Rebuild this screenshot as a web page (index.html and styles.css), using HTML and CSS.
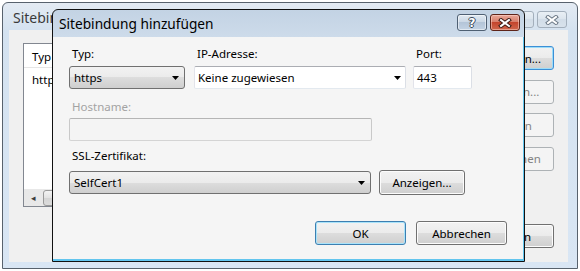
FILE: index.html
```html
<!DOCTYPE html>
<html lang="de">
<head>
    <meta charset="UTF-8">
    <title>Sitebindung hinzufügen</title>
    <link rel="stylesheet" href="styles.css">
</head>
<body>
    <!-- Hintergrundfenster: Sitebindungen -->
    <div class="bg-window">
        <div class="bg-titlebar">
            <span class="bg-title">Sitebindungen</span>
            <div class="caption bg-caption">
                <span class="cap-btn cap-inactive"><span class="qmark">?</span></span>
                <span class="cap-btn cap-inactive">
                    <svg width="14" height="10" viewBox="0 0 14 10"><path d="M3 2L11 8M11 2L3 8" stroke="#6b7886" stroke-width="4" stroke-linecap="square"/><path d="M3 2L11 8M11 2L3 8" stroke="#fff" stroke-width="2" stroke-linecap="square"/></svg>
                </span>
            </div>
        </div>
        <div class="bg-client">
            <div class="listview">
                <div class="lv-header">
                    <span class="lv-col">Typ</span>
                </div>
                <div class="lv-row">
                    <span class="lv-col">http</span>
                </div>
                <div class="hscroll">
                    <span class="scroll-arrow">◂</span>
                    <span class="scroll-thumb"></span>
                </div>
            </div>
            <div class="side-buttons">
                <button class="button button-focus">Hinzufügen...</button>
                <button class="button" disabled>Bearbeiten...</button>
                <button class="button" disabled>Entfernen</button>
                <button class="button" disabled>Durchsuchen</button>
                <button class="button button-close">Schließen</button>
            </div>
        </div>
    </div>

    <!-- Vordergrund: Sitebindung hinzufügen -->
    <div class="dialog">
        <div class="dlg-titlebar">
            <span class="dlg-title">Sitebindung hinzufügen</span>
            <div class="caption">
                <span class="cap-btn cap-help"><span class="qmark">?</span></span>
                <span class="cap-btn cap-close">
                    <svg width="14" height="10" viewBox="0 0 14 10"><path d="M3 2L11 8M11 2L3 8" stroke="#3b1a14" stroke-width="4" stroke-linecap="square"/><path d="M3 2L11 8M11 2L3 8" stroke="#fff" stroke-width="2" stroke-linecap="square"/></svg>
                </span>
            </div>
        </div>
        <div class="dlg-client">
            <div class="field-row">
                <div class="field field-typ">
                    <label class="label">Typ:</label>
                    <div class="combo">
                        <span>https</span>
                        <svg class="arrow" width="7" height="4" viewBox="0 0 7 4"><path d="M0 0H7L3.5 4Z"/></svg>
                    </div>
                </div>
                <div class="field field-ip">
                    <label class="label">IP-Adresse:</label>
                    <div class="textbox combo-edit">
                        <span>Keine zugewiesen</span>
                        <svg class="arrow" width="7" height="4" viewBox="0 0 7 4"><path d="M0 0H7L3.5 4Z"/></svg>
                    </div>
                </div>
                <div class="field field-port">
                    <label class="label">Port:</label>
                    <div class="textbox">443</div>
                </div>
            </div>

            <div class="field field-host">
                <label class="label label-disabled">Hostname:</label>
                <div class="textbox textbox-disabled"></div>
            </div>

            <div class="field field-ssl">
                <label class="label">SSL-Zertifikat:</label>
                <div class="ssl-row">
                    <div class="combo combo-ssl">
                        <span>SelfCert1</span>
                        <svg class="arrow" width="7" height="4" viewBox="0 0 7 4"><path d="M0 0H7L3.5 4Z"/></svg>
                    </div>
                    <button class="button button-show">Anzeigen...</button>
                </div>
            </div>

            <div class="dlg-buttons">
                <button class="button button-default">OK</button>
                <button class="button">Abbrechen</button>
            </div>
        </div>
    </div>
</body>
</html>
```

FILE: styles.css
```css
body {
    margin: 0;
    background-color: #fff;
    font-family: "Segoe UI", "Noto Sans", sans-serif;
    font-size: 11.5px;
    color: #000;
}

/* ---------- Fensterrahmen hinten ---------- */

.bg-window {
    box-sizing: border-box;
    width: 576px;
    height: 267px;
    margin: 2px 0 0 2px;
    padding: 0 9px 6px 6px;
    border: 1px solid #58626d;
    border-radius: 6px 6px 0 0;
    background: linear-gradient(#e4ebf3, #d4e2f0 28px, #d9e6f4);
    display: flex;
    flex-direction: column;
}

.bg-titlebar {
    height: 27px;
    display: flex;
    justify-content: space-between;
    flex-shrink: 0;
}

.bg-title {
    width: 39px;
    overflow: hidden;
    white-space: nowrap;
    margin-left: 4px;
    padding-top: 5px;
    font-size: 14px;
    color: #3a3a3a;
}

.caption {
    display: flex;
    gap: 3px;
}

.bg-caption {
    padding-top: 8px;
    margin-right: 1px;
}

.cap-btn {
    box-sizing: border-box;
    width: 30px;
    height: 17px;
    border-radius: 3px;
    display: flex;
    align-items: center;
    justify-content: center;
}

.cap-inactive {
    border: 1px solid #a3afbc;
    background: linear-gradient(#e9eff5, #dbe4ed 50%, #d2dde8 50%, #d8e2ec);
}

.qmark {
    font-family: "DejaVu Sans", sans-serif;
    font-weight: bold;
    font-size: 12px;
    color: #fff;
    text-shadow: -1px 0 #3c4a5a, 1px 0 #3c4a5a, 0 -1px #3c4a5a, 0 1px #3c4a5a;
}

.bg-client {
    flex: 1;
    background-color: #f0f0f0;
    display: flex;
    padding: 13px 14px 14px 14px;
}

.listview {
    position: relative;
    box-sizing: border-box;
    width: 421px;
    height: 164px;
    background-color: #fff;
    border: 1px solid #828790;
}

.lv-header {
    display: flex;
    height: 23px;
    border-bottom: 1px solid #e5e5e5;
}

.lv-row {
    display: flex;
    height: 19px;
    padding-top: 2px;
}

.lv-col {
    width: 70px;
    padding: 5px 0 0 8px;
    border-right: 1px solid #e5e5e5;
}

.lv-row .lv-col {
    border-right: none;
    padding-top: 2px;
}

.hscroll {
    position: absolute;
    left: 0;
    right: 0;
    bottom: 0;
    height: 17px;
    background: linear-gradient(90deg, #e8e8e8, #f0f0f0);
    display: flex;
    align-items: center;
}

.scroll-arrow {
    width: 18px;
    text-align: center;
    font-size: 9px;
    color: #3d3d3d;
}

.scroll-thumb {
    box-sizing: border-box;
    width: 120px;
    height: 16px;
    margin-left: 1px;
    border: 1px solid #9a9a9a;
    border-radius: 3px;
    background: linear-gradient(#f3f3f3, #e2e2e2 50%, #d4d4d4 50%, #dcdcdc);
}

.side-buttons {
    display: flex;
    flex-direction: column;
    gap: 9.5px;
    margin: 3px 0 0 12px;
}

.side-buttons .button {
    width: 98px;
    height: 24px;
}

.button-close {
    margin-top: auto;
}

/* ---------- Knöpfe, Felder ---------- */

.button {
    box-sizing: border-box;
    padding: 0;
    font-family: inherit;
    font-size: inherit;
    color: #000;
    border: 1px solid #707070;
    border-radius: 3px;
    background: linear-gradient(#f2f2f2, #ebebeb 50%, #dddddd 50%, #cfcfcf);
    box-shadow: inset 0 0 0 1px #fcfcfc;
}

.button:disabled {
    color: #838383;
    border-color: #adb2b5;
    background: #f4f4f4;
    box-shadow: none;
}

.button-focus {
    border-color: #3c8fd6;
    box-shadow: inset 0 0 0 1px #9cdcf8;
}

.button-default {
    border-color: #3c7fb1;
    box-shadow: inset 0 0 0 1px #a9e3fa;
}

.combo {
    box-sizing: border-box;
    height: 23px;
    display: flex;
    align-items: center;
    justify-content: space-between;
    padding: 0 5px 0 4px;
    border: 1px solid #707070;
    border-radius: 3px;
    background: linear-gradient(#f2f2f2, #ebebeb 50%, #dddddd 50%, #cfcfcf);
}

.arrow {
    fill: #000;
}

.textbox {
    box-sizing: border-box;
    height: 23px;
    padding: 0 3px;
    display: flex;
    align-items: center;
    background-color: #fff;
    border: 1px solid;
    border-color: #abadb3 #dbdfe6 #e3e9ef #e2e3ea;
    border-radius: 2px;
}

.combo-edit {
    justify-content: space-between;
    padding-right: 4px;
}

.textbox-disabled {
    background-color: #f4f4f4;
    border-color: #b5b5b5 #c9c9c9 #d4d4d4 #c9c9c9;
}

/* ---------- Dialog vorne ---------- */

.dialog {
    position: absolute;
    left: 52px;
    top: 9px;
    box-sizing: border-box;
    width: 473px;
    height: 253px;
    border: 1px solid #111;
    border-radius: 6px 6px 0 0;
    background: linear-gradient(#c3d3e4, #cddbea 27px);
    display: flex;
    flex-direction: column;
}

.dlg-titlebar {
    height: 27px;
    flex-shrink: 0;
    display: flex;
    justify-content: space-between;
}

.dlg-title {
    padding: 4px 0 0 6px;
    font-size: 13.7px;
}

.dlg-titlebar .caption {
    padding-top: 4px;
    margin-right: 4px;
}

.cap-help {
    border: 1px solid #4f6073;
    background: linear-gradient(#e1e9f2, #c9d6e4 50%, #b4c5d8 50%, #c3d3e4);
    box-shadow: inset 0 0 0 1px rgba(255, 255, 255, 0.5);
}

.cap-close {
    border: 1px solid #5e2419;
    background: linear-gradient(#e9a899, #d67a66 50%, #c4452d 50%, #d0674d);
    box-shadow: inset 0 0 0 1px rgba(255, 220, 210, 0.5);
}

.dlg-client {
    flex: 1;
    background-color: #f5f5f5;
    border-right: 1px solid #62c5ee;
    border-bottom: 2px solid #62c5ee;
    padding: 9px 16px 0 16px;
    display: flex;
    flex-direction: column;
}

.field {
    display: flex;
    flex-direction: column;
}

.label {
    line-height: 16px;
    padding-left: 3px;
    margin-bottom: 4px;
}

.label-disabled {
    color: #a3a3a3;
}

.field-row {
    display: flex;
}

.field-typ {
    width: 116px;
}

.field-ip {
    width: 212px;
    margin-left: 9px;
}

.field-port {
    width: 59px;
    margin-left: 7px;
}

.field-host {
    margin-top: 10px;
}

.field-host .label {
    margin-bottom: 3px;
}

.field-host .textbox {
    width: 303px;
}

.field-ssl {
    margin-top: 7px;
}

.field-ssl .label {
    margin-bottom: 6px;
}

.ssl-row {
    display: flex;
    align-items: center;
    gap: 8px;
}

.combo-ssl {
    width: 302px;
}

.button-show {
    width: 86px;
    height: 25px;
}

.dlg-buttons {
    display: flex;
    justify-content: flex-end;
    gap: 10px;
    margin-top: 26px;
}

.dlg-buttons .button {
    width: 91px;
    height: 24px;
}
```
